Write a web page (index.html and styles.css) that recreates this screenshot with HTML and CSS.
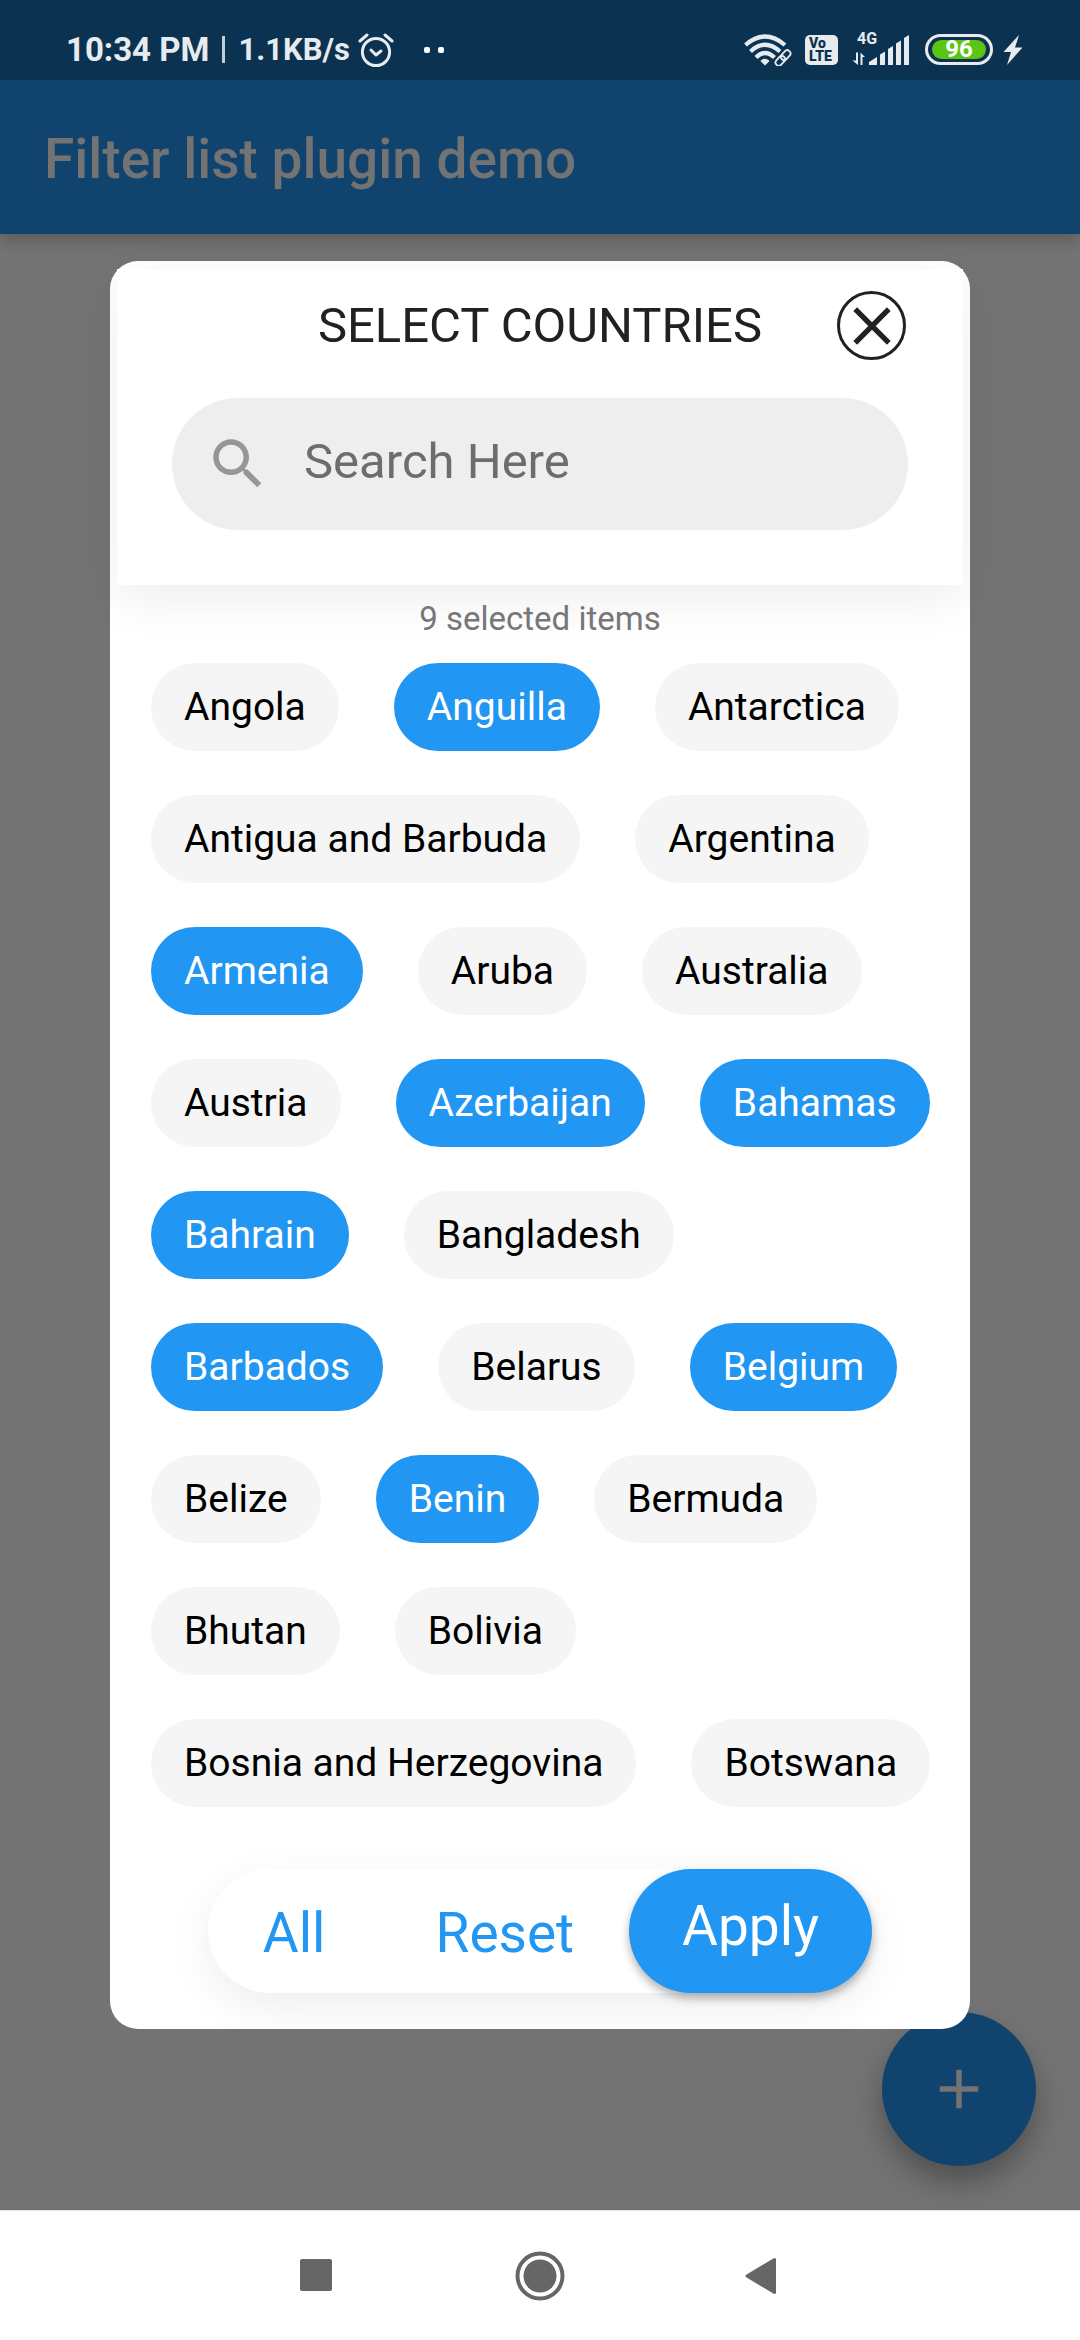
FILE: index.html
```html
<!DOCTYPE html>
<html lang="en">
<head>
<meta charset="utf-8">
<meta name="viewport" content="width=device-width, initial-scale=1">
<title>Filter list plugin demo</title>
<link rel="stylesheet" href="styles.css">
</head>
<body>
<div class="screen">
  <div class="status-bar">
    <div class="status-left">
      <span class="clock">10:34 PM</span>
      <span class="divider"></span>
      <span class="speed">1.1KB/s</span>
      <svg class="alarm" width="36" height="36" viewBox="0 0 36 36" fill="none" stroke="currentColor" stroke-width="3" stroke-linecap="round"><circle cx="18" cy="20" r="13.6"/><path d="M2 9 9 3M27 3l7 6"/><path d="m13 18 5 5 5-4" stroke-linejoin="round"/></svg>
      <svg width="20" height="6" viewBox="0 0 20 6" fill="#fff"><rect width="6" height="6" rx="2"/><rect x="14" width="6" height="6" rx="2"/></svg>
    </div>
    <div class="status-right">
      <svg width="48" height="32" viewBox="0 0 48 32" fill="none" stroke="currentColor" stroke-width="4.2"><path d="M1.500 11Q21 -6 41 11"/><path d="M6.500 17.500Q21 4 36 17.500"/><path d="M12 23.500Q21 14.500 30.500 23.500"/><path d="M17.500 27Q21 24 24.500 27L21 30.500z" fill="currentColor" stroke-width="1.500"/><g stroke-width="1.800"><rect x="36" y="18" width="11" height="6.500" rx="3.200" transform="rotate(-48 41.500 21)"/><rect x="31" y="23.500" width="11" height="6.500" rx="3.200" transform="rotate(-48 36.500 27)"/></g></svg>
      <span class="volte"><span>Vo</span><span>LTE</span></span>
      <span class="signal">
        <span class="network">4G</span>
        <svg width="58" height="30" viewBox="0 0 58 30" fill="currentColor"><path d="M4 17.500h2V30L.500 25.500H4zM8.500 30V17.500L13 22h-2.500v8zM17 30v-3l8-5v8zM28 30V19.500l5-3V30zM36 30V14l5-3v19zM44 30V8.500l5-3V30zM52 30V3l5-3v30z"/></svg>
      </span>
      <span class="battery"><span>96</span></span>
      <svg width="20" height="30" viewBox="0 0 20 30" fill="currentColor"><path d="M16 0 .500 17H8L4 30 19.500 12.500H12z"/></svg>
    </div>
  </div>

  <header class="app-bar"><h1>Filter list plugin demo</h1></header>

  <main class="stage">
    <button class="fab" type="button" aria-label="Add"><svg width="66" height="66" viewBox="0 0 24 24" fill="currentColor"><path d="M19 13h-6v6h-2v-6H5v-2h6V5h2v6h6v2z"/></svg></button>

    <section class="dialog" role="dialog" aria-labelledby="dialog-title">
      <div class="dialog-head">
        <div class="title-row">
          <h2 id="dialog-title">SELECT COUNTRIES</h2>
          <button class="close" type="button" aria-label="Close"><svg width="64" height="64" viewBox="0 0 24 24" fill="currentColor"><path d="M19 6.410 17.590 5 12 10.590 6.410 5 5 6.410 10.590 12 5 17.590 6.410 19 12 13.410 17.590 19 19 17.590 13.410 12z"/></svg></button>
        </div>
        <label class="search">
          <svg width="66" height="66" viewBox="0 0 24 24" fill="currentColor"><path d="M15.500 14h-.790l-.280-.270C15.410 12.590 16 11.110 16 9.500 16 5.910 13.090 3 9.500 3S3 5.910 3 9.500 5.910 16 9.500 16c1.610 0 3.090-.590 4.230-1.570l.270.280v.790l5 4.990L20.490 19l-4.990-5zm-6 0C7.010 14 5 11.990 5 9.500S7.010 5 9.500 5 14 7.010 14 9.500 11.990 14 9.500 14z"/></svg>
          <input type="text" placeholder="Search Here" aria-label="Search Here">
        </label>
      </div>

      <p class="count">9 selected items</p>

      <div class="chips">
        <button type="button" class="chip">Angola</button>
        <button type="button" class="chip selected">Anguilla</button>
        <button type="button" class="chip">Antarctica</button>
        <button type="button" class="chip">Antigua and Barbuda</button>
        <button type="button" class="chip">Argentina</button>
        <button type="button" class="chip selected">Armenia</button>
        <button type="button" class="chip">Aruba</button>
        <button type="button" class="chip">Australia</button>
        <button type="button" class="chip">Austria</button>
        <button type="button" class="chip selected">Azerbaijan</button>
        <button type="button" class="chip selected">Bahamas</button>
        <button type="button" class="chip selected">Bahrain</button>
        <button type="button" class="chip">Bangladesh</button>
        <button type="button" class="chip selected">Barbados</button>
        <button type="button" class="chip">Belarus</button>
        <button type="button" class="chip selected">Belgium</button>
        <button type="button" class="chip">Belize</button>
        <button type="button" class="chip selected">Benin</button>
        <button type="button" class="chip">Bermuda</button>
        <button type="button" class="chip">Bhutan</button>
        <button type="button" class="chip">Bolivia</button>
        <button type="button" class="chip">Bosnia and Herzegovina</button>
        <button type="button" class="chip">Botswana</button>
      </div>

      <div class="actions">
        <button type="button" class="action">All</button>
        <button type="button" class="action">Reset</button>
        <button type="button" class="action apply">Apply</button>
      </div>
    </section>
  </main>

  <nav class="nav-bar">
    <button type="button" aria-label="Recent apps"><svg width="50" height="50" viewBox="0 0 50 50" fill="currentColor"><rect x="7" y="8" width="32" height="32" rx="2"/></svg></button>
    <button type="button" aria-label="Home"><svg width="50" height="50" viewBox="0 0 50 50"><circle cx="25" cy="25" r="22.500" fill="none" stroke="currentColor" stroke-width="4"/><circle cx="25" cy="25" r="16.500" fill="currentColor"/></svg></button>
    <button type="button" aria-label="Back"><svg width="50" height="50" viewBox="0 0 50 50" fill="currentColor" stroke="currentColor" stroke-width="3" stroke-linejoin="round"><path d="M37.500 8.500v33L10 25z"/></svg></button>
  </nav>
</div>
</body>
</html>
```
FILE: styles.css
```css
* { box-sizing: border-box; }

body {
  margin: 0;
  font-family: Roboto, "Noto Sans", sans-serif;
  background: #737373;
}

h1, h2, p { margin: 0; font-weight: 400; }

button {
  margin: 0;
  padding: 0;
  border: 0;
  background: none;
  color: inherit;
  font: inherit;
  cursor: pointer;
}

svg { display: block; flex: none; }

.screen {
  display: flex;
  flex-direction: column;
  min-height: 100vh;
}

/* System status bar */
.status-bar {
  display: flex;
  justify-content: space-between;
  align-items: center;
  height: 80px;
  padding: 19px 57px 0 66px;
  background: #0b3351;
  color: #e7ebee;
}

.status-left, .status-right { display: flex; align-items: center; }
.clock { font-size: 33px; font-weight: 700; }
.divider { width: 3px; height: 27px; margin: 0 13px; background: #c4cdd4; }
.speed { font-size: 31px; font-weight: 700; }
.alarm { margin: 0 30px 0 8px; }

.volte {
  display: flex;
  flex-direction: column;
  justify-content: center;
  width: 33px;
  height: 30px;
  margin: 0 14px 0 13px;
  padding-left: 4px;
  border-radius: 5px;
  background: #e7ebee;
  color: #0b3351;
  font-size: 14px;
  font-weight: 900;
  line-height: 13px;
}

.signal { position: relative; }
.network {
  position: absolute;
  left: 5px;
  top: -4px;
  font-size: 16px;
  font-weight: 700;
  line-height: 16px;
}

.battery {
  width: 68px;
  height: 31px;
  margin: 0 10px 0 15px;
  padding: 3px 4px;
  border: 3px solid #e7ebee;
  border-radius: 16px;
}
.battery span {
  display: block;
  border-radius: 10px;
  background: #5ac514;
  color: #fff;
  font-size: 24px;
  font-weight: 700;
  line-height: 19px;
  text-align: center;
}

/* App bar */
.app-bar {
  position: relative;
  display: flex;
  align-items: center;
  height: 154px;
  padding: 4px 44px 0;
  background: #10446e;
  box-shadow: 0 6px 14px rgba(0, 0, 0, 0.2);
  color: #737373;
}
.app-bar h1 { font-size: 55px; font-weight: 500; }

.stage {
  position: relative;
  flex: 1;
  padding: 27px 110px 181px;
}

.fab {
  position: absolute;
  right: 44px;
  bottom: 44px;
  display: grid;
  place-items: center;
  width: 154px;
  height: 154px;
  border-radius: 50%;
  background: #10446e;
  box-shadow: 0 16px 28px rgba(0, 0, 0, 0.3);
  color: #737373;
}

/* Filter dialog */
.dialog {
  position: relative;
  padding: 8px 0 36px;
  border-radius: 28px;
  background: #fff;
}

.dialog-head {
  margin: 0 7px;
  padding: 22px 55px 55px;
  background: #fff;
  box-shadow: 0 14px 46px rgba(0, 0, 0, 0.07);
}

.title-row {
  display: grid;
  grid-template-columns: 69px 1fr 69px;
  align-items: center;
  margin-bottom: 38px;
  padding: 0 2px;
  color: #212121;
}
.title-row h2 { grid-column: 2; font-size: 49px; text-align: center; }

.close {
  display: grid;
  place-items: center;
  width: 69px;
  height: 69px;
  border: 3px solid #212121;
  border-radius: 50%;
}

.search {
  display: flex;
  align-items: center;
  height: 132px;
  padding: 0 33px;
  border-radius: 66px;
  background: #eee;
  color: #969696;
}
.search input {
  flex: 1;
  min-width: 0;
  margin-left: 33px;
  padding: 0 0 6px;
  border: 0;
  outline: 0;
  background: none;
  color: #212121;
  font: 49px Roboto, "Noto Sans", sans-serif;
}
.search input::placeholder { color: #6d6d6d; opacity: 1; }

.count {
  position: relative;
  margin: 14px 0 24px;
  color: #777;
  font-size: 33px;
  line-height: 40px;
  text-align: center;
}

.chips {
  display: flex;
  flex-wrap: wrap;
  gap: 44px 55px;
  padding: 0 30px 0 41px;
}
.chip {
  height: 88px;
  padding: 0 33px;
  border-radius: 44px;
  background: #f5f5f5;
  color: #000;
  font-size: 39px;
  white-space: nowrap;
}
.chip.selected { background: #2196f3; color: #fff; }

.actions {
  display: flex;
  width: fit-content;
  height: 124px;
  margin: 62px auto 0;
  border-radius: 62px;
  background: #fff;
  box-shadow: 0 14px 46px rgba(0, 0, 0, 0.07);
  color: #2196f3;
  font-size: 55px;
}
.action { padding: 4px 55px 0; }
.apply {
  padding: 0 53px 10px;
  border-radius: 62px;
  background: #2196f3;
  box-shadow: 0 5px 10px rgba(0, 0, 0, 0.3);
  color: #fff;
}

/* System navigation */
.nav-bar {
  display: flex;
  justify-content: center;
  align-items: center;
  gap: 172px;
  height: 130px;
  border-top: 1px solid #e4e4e4;
  background: #fff;
  color: #666;
}
```
